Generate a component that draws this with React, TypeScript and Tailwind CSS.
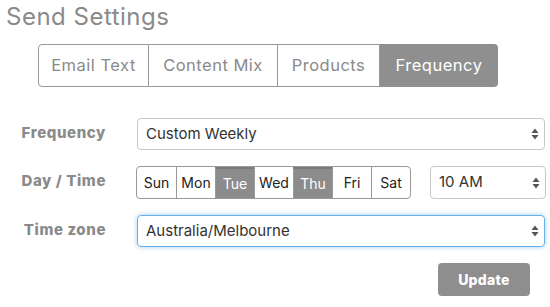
import React from "react";

const Arrows = () => (
  <svg width="8" height="12" viewBox="0 0 8 12" className="absolute right-[5px] top-1/2 -translate-y-1/2">
    <path d="M4 0.5 L7.5 5 L0.5 5 Z" fill="#555" />
    <path d="M4 11.5 L7.5 7 L0.5 7 Z" fill="#555" />
  </svg>
);

const tabs = [
  { label: "Email Text", w: "w-[111px]" },
  { label: "Content Mix", w: "w-[129px]" },
  { label: "Products", w: "w-[102px]" },
  { label: "Frequency", w: "w-[118px]", active: true },
];

const days = [
  { d: "Sun" },
  { d: "Mon" },
  { d: "Tue", a: true },
  { d: "Wed" },
  { d: "Thu", a: true },
  { d: "Fri" },
  { d: "Sat" },
];

export default function App() {
  return (
    <div
      className="w-[550px] h-[307px] bg-white overflow-hidden"
      style={{ fontFamily: "Inter, 'Open Sans', sans-serif" }}
    >
      <div className="pl-[6px] pt-[1px] text-[24px] leading-[31px] text-[#8a8a8a] tracking-[0.5px]">
        Send Settings
      </div>
      <div className="flex ml-[38px] mt-[12px] h-[43px]">
        {tabs.map((t, i) => (
          <div
            key={t.label}
            className={`${t.w} flex items-center justify-center text-[16.5px] tracking-[0.5px] ${
              t.active
                ? "bg-[#8f8f8f] text-white rounded-r-[4px]"
                : "border-y border-[#9a9a9a] text-[#8a8a8a] border-r"
            } ${i === 0 ? "border-l rounded-l-[4px]" : ""}`}
          >
            {t.label}
          </div>
        ))}
      </div>

      <div className="flex flex-col gap-[16px] mt-[31px]">
        <div className="flex">
          <div className="w-[106px] text-right font-extrabold text-[15px] tracking-[0.6px] text-[#8a8a8a] pt-[4px]">
            Frequency
          </div>
          <div className="ml-[31px] relative w-[408px] h-[32px] border border-[#c8c8c8] rounded-[4px] flex items-center pl-[8px] text-[15px] text-[#333]">
            Custom Weekly
            <Arrows />
          </div>
        </div>

        <div className="flex">
          <div className="w-[106px] text-right font-extrabold text-[15px] tracking-[0.6px] text-[#8a8a8a] pt-[4px]">
            Day / Time
          </div>
          <div className="ml-[30px] flex h-[33px] border border-[#9a9a9a] rounded-[4px] overflow-hidden">
            {days.map((x, i) => (
              <div
                key={x.d}
                className={`w-[39px] flex items-center justify-center text-[14px] ${
                  i > 0 ? "border-l border-[#9a9a9a]" : ""
                } ${x.a ? "bg-[#8c8c8c] text-white border-t-2 border-t-[#7a7a7a]" : "text-[#222]"}`}
              >
                {x.d}
              </div>
            ))}
          </div>
          <div className="ml-[19px] relative w-[116px] h-[33px] border border-[#c8c8c8] rounded-[4px] flex items-center pl-[8px] text-[15px] text-[#333]">
            10 AM
            <Arrows />
          </div>
        </div>

        <div className="flex">
          <div className="w-[106px] text-right font-extrabold text-[15px] tracking-[0.6px] text-[#8a8a8a] pt-[4px]">
            Time zone
          </div>
          <div className="ml-[31px] relative w-[408px] h-[32px] border border-[#66afe9] shadow-[0_0_5px_rgba(102,175,233,0.6)] rounded-[4px] flex items-center pl-[8px] text-[15px] text-[#333]">
            Australia/Melbourne
            <Arrows />
          </div>
        </div>
      </div>

      <div className="flex mt-[16px] pl-[438px]">
        <div className="w-[92px] h-[33px] bg-[#8e8e8e] rounded-[4px] flex items-center justify-center text-white font-extrabold text-[14px] tracking-[0.3px]">
          Update
        </div>
      </div>
    </div>
  );
}
